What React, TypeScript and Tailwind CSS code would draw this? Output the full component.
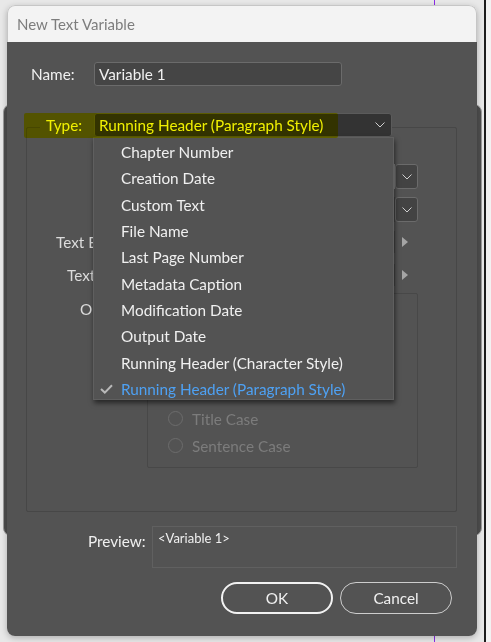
import React from "react";

const font = { fontFamily: '"Lato", "Open Sans", sans-serif' };

function Chevron({ color = "#cfcfcf" }: { color?: string }) {
  return (
    <svg width="10" height="6" viewBox="0 0 10 6" fill="none">
      <polyline points="0.5,0.5 5,5 9.5,0.5" stroke={color} strokeWidth="1" />
    </svg>
  );
}

function Tri() {
  return (
    <svg width="6" height="10" viewBox="0 0 6 10">
      <polygon points="0,0 6,5 0,10" fill="#a5a5a5" />
    </svg>
  );
}

function Radio({ label }: { label?: string }) {
  return (
    <div className="h-[27px] flex items-center">
      <div className="w-[15px] h-[15px] rounded-full border border-[#6c6c6c]" />
      {label && <span className="ml-[9px] text-[#7c7c7c]">{label}</span>}
    </div>
  );
}

const menuItems = [
  "Chapter Number",
  "Creation Date",
  "Custom Text",
  "File Name",
  "Last Page Number",
  "Metadata Caption",
  "Modification Date",
  "Output Date",
  "Running Header (Character Style)",
  "Running Header (Paragraph Style)",
];

export default function App() {
  return (
    <div
      className="relative w-[491px] h-[642px] overflow-hidden bg-[#e8e8e8] text-[15.3px] leading-[20px]"
      style={font}
    >
      {/* window behind */}
      <div className="absolute left-[3px] top-[104px] w-[479px] h-[432px] rounded-lg bg-[#4e4e4e] border border-[#9c9c9c]" />
      {/* right black divider */}
      <div className="absolute left-[484px] top-0 w-[2px] h-[642px] bg-[#1c1c1c]" />
      <div className="absolute left-[486px] top-0 w-[5px] h-[642px] bg-[#f2f2f2]" />
      {/* purple guides */}
      <div className="absolute left-[434px] top-0 w-px h-[5px] bg-[#8b2be8]" />
      <div className="absolute left-[434px] top-[636px] w-px h-[6px] bg-[#8b2be8]" />

      {/* dialog */}
      <div className="absolute left-[7px] top-[5px] w-[470px] h-[631px] rounded-lg overflow-hidden flex flex-col shadow-[0_2px_6px_rgba(0,0,0,0.25)]">
        <div className="h-[37px] shrink-0 bg-[#f3f3f3] border-t border-x border-[#c6c6c6] rounded-t-lg flex items-center pl-[9px] text-[15px] text-[#7d7d7d]">
          New Text Variable
        </div>
        <div className="flex-1 bg-[#535353] flex flex-col text-[#f0f0f0]">
          {/* Name row */}
          <div className="mt-[20px] h-[24px] flex items-center">
            <span className="ml-[24px] w-[63px]">Name:</span>
            <div className="w-[248px] h-[24px] bg-[#454545] border border-[#6b6b6b] rounded-[3px] flex items-center pl-[4px]">
              Variable 1
            </div>
          </div>

          {/* group box */}
          <div className="mt-[41px] ml-[19px] w-[431px] h-[385px] border border-[#474747] rounded-[2px] flex flex-col">
            {/* Type row (legend) */}
            <div className="-mt-[15px] ml-[13px] flex items-center h-[24px]">
              <span className="w-[54px] pl-[6px] bg-[#535353]">Type:</span>
              <div className="w-[298px] h-[24px] bg-[#333333] border border-[#5b5b5b] rounded-[3px] flex items-center justify-between pl-[4px] pr-[6px]">
                <span>Running Header (Paragraph Style)</span>
                <Chevron />
              </div>
            </div>

            {/* Style row */}
            <div className="mt-[27px] flex items-center h-[25px]">
              <div className="ml-[120px] w-[271px] h-[25px] flex">
                <div className="flex-1 bg-[#454545] border-r-2 border-[#8a8a8a]" />
                <div className="w-[23px] bg-[#434343] border border-[#6b6b6b] rounded-[3px] flex items-center justify-center">
                  <Chevron />
                </div>
              </div>
            </div>

            {/* Use row */}
            <div className="mt-[8px] flex items-center h-[25px]">
              <div className="ml-[120px] w-[271px] h-[25px] flex">
                <div className="flex-1 bg-[#454545]" />
                <div className="w-[23px] bg-[#434343] border border-[#6b6b6b] rounded-[3px] flex items-center justify-center">
                  <Chevron />
                </div>
              </div>
            </div>

            {/* Text Before */}
            <div className="mt-[9px] flex items-center h-[22px] text-[#dcdcdc]">
              <div className="w-[66px] overflow-hidden whitespace-nowrap">
                <span className="ml-[29px]">Text Before:</span>
              </div>
              <div className="ml-[54px] w-[248px] h-[22px] bg-[#454545]" />
              <div className="ml-[7px]">
                <Tri />
              </div>
            </div>

            {/* Text After */}
            <div className="mt-[11px] flex items-center h-[22px] text-[#dcdcdc]">
              <div className="w-[66px] overflow-hidden whitespace-nowrap">
                <span className="ml-[40px]">Text After:</span>
              </div>
              <div className="ml-[54px] w-[248px] h-[22px] bg-[#454545]" />
              <div className="ml-[7px]">
                <Tri />
              </div>
            </div>

            {/* Options */}
            <div className="mt-[7px] flex items-start text-[#dcdcdc]">
              <div className="w-[66px] overflow-hidden whitespace-nowrap mt-[6px]">
                <span className="ml-[53px]">Options:</span>
              </div>
              <div className="ml-[54px] w-[271px] h-[175px] border border-[#484848] rounded-[2px] pt-[3px] pl-[20px] flex flex-col">
                <div className="h-[27px]" />
                <div className="h-[27px]" />
                <Radio />
                <Radio />
                <Radio label="Title Case" />
                <Radio label="Sentence Case" />
              </div>
            </div>
          </div>

          {/* Preview */}
          <div className="mt-[14px] flex items-start">
            <span className="ml-[81px] w-[64px] pt-[5px]">Preview:</span>
            <div className="w-[305px] h-[42px] border border-[#606060] pl-[5px] pt-[2px] text-[13px] leading-[18px]">
              &lt;Variable 1&gt;
            </div>
          </div>

          {/* Buttons */}
          <div className="mt-[14px] flex justify-end gap-[7px] pr-[25px]">
            <div className="w-[112px] h-[32px] rounded-full border-2 border-[#f2f2f2] flex items-center justify-center">
              OK
            </div>
            <div className="w-[112px] h-[32px] rounded-full border border-[#cdcdcd] flex items-center justify-center">
              Cancel
            </div>
          </div>
        </div>
      </div>

      {/* dropdown menu */}
      <div className="absolute left-[93px] top-[137px] w-[301px] h-[263px] overflow-hidden bg-[#535353] border border-[#5f5f5f] shadow-[1px_3px_5px_rgba(0,0,0,0.55)] pt-[1px] text-[#f0f0f0]">
        {menuItems.map((item, i) => {
          const sel = i === menuItems.length - 1;
          return (
            <div key={item} className="h-[26.3px] flex items-center relative">
              {sel && (
                <svg className="absolute left-[6px]" width="13" height="10" viewBox="0 0 13 10" fill="none">
                  <path d="M1 5 L4.8 8.6 L12 1.2" stroke="#b9b9b9" strokeWidth="2" />
                </svg>
              )}
              <span className={"ml-[27px] whitespace-nowrap " + (sel ? "text-[#4ea1f3]" : "")}>{item}</span>
            </div>
          );
        })}
      </div>

      {/* yellow marker highlight */}
      <div className="absolute left-[24px] top-[113px] w-[314px] h-[25px] bg-[#ffff00] mix-blend-multiply rounded-[2px]" />
    </div>
  );
}
